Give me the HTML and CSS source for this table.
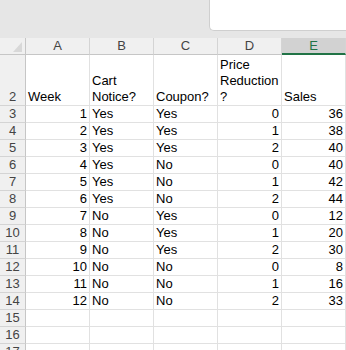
FILE: index.html
```html
<!DOCTYPE html>
<html lang="en">
<head>
    <meta charset="UTF-8">
    <title>Sheet</title>
    <link rel="stylesheet" href="styles.css">
</head>
<body>
    <div class="ribbon"><div class="namebox"></div></div>

<div class="sheet">
    <div class="corner"><span class="tri"></span></div>
    <div class="colhead">A</div>
    <div class="colhead">B</div>
    <div class="colhead">C</div>
    <div class="colhead">D</div>
    <div class="colhead sel">E</div>

    <div class="rowhead tall">2</div>
    <div class="cell tall">Week</div>
    <div class="cell tall">Cart<br>Notice?</div>
    <div class="cell tall">Coupon?</div>
    <div class="cell tall">Price<br>Reduction<br>?</div>
    <div class="cell tall">Sales</div>

    <div class="rowhead">3</div><div class="cell num">1</div><div class="cell">Yes</div><div class="cell">Yes</div><div class="cell num">0</div><div class="cell num">36</div>
    <div class="rowhead">4</div><div class="cell num">2</div><div class="cell">Yes</div><div class="cell">Yes</div><div class="cell num">1</div><div class="cell num">38</div>
    <div class="rowhead">5</div><div class="cell num">3</div><div class="cell">Yes</div><div class="cell">Yes</div><div class="cell num">2</div><div class="cell num">40</div>
    <div class="rowhead">6</div><div class="cell num">4</div><div class="cell">Yes</div><div class="cell">No</div><div class="cell num">0</div><div class="cell num">40</div>
    <div class="rowhead">7</div><div class="cell num">5</div><div class="cell">Yes</div><div class="cell">No</div><div class="cell num">1</div><div class="cell num">42</div>
    <div class="rowhead">8</div><div class="cell num">6</div><div class="cell">Yes</div><div class="cell">No</div><div class="cell num">2</div><div class="cell num">44</div>
    <div class="rowhead">9</div><div class="cell num">7</div><div class="cell">No</div><div class="cell">Yes</div><div class="cell num">0</div><div class="cell num">12</div>
    <div class="rowhead">10</div><div class="cell num">8</div><div class="cell">No</div><div class="cell">Yes</div><div class="cell num">1</div><div class="cell num">20</div>
    <div class="rowhead">11</div><div class="cell num">9</div><div class="cell">No</div><div class="cell">Yes</div><div class="cell num">2</div><div class="cell num">30</div>
    <div class="rowhead">12</div><div class="cell num">10</div><div class="cell">No</div><div class="cell">No</div><div class="cell num">0</div><div class="cell num">8</div>
    <div class="rowhead">13</div><div class="cell num">11</div><div class="cell">No</div><div class="cell">No</div><div class="cell num">1</div><div class="cell num">16</div>
    <div class="rowhead">14</div><div class="cell num">12</div><div class="cell">No</div><div class="cell">No</div><div class="cell num">2</div><div class="cell num">33</div>
    <div class="rowhead">15</div><div class="cell"></div><div class="cell"></div><div class="cell"></div><div class="cell"></div><div class="cell"></div>
    <div class="rowhead">16</div><div class="cell"></div><div class="cell"></div><div class="cell"></div><div class="cell"></div><div class="cell"></div>
    <div class="rowhead">17</div><div class="cell"></div><div class="cell"></div><div class="cell"></div><div class="cell"></div><div class="cell"></div>
</div>
</body>
</html>
```

FILE: styles.css
```css
body {
    margin: 0;
    background: #ffffff;
    font-family: 'Liberation Sans', Arial, sans-serif;
    overflow: hidden;
}
.ribbon {
    height: 38px;
    background-color: #e6e6e6;
    display: flex;
    justify-content: flex-end;
}
.namebox {
    width: 136px;
    height: 30px;
    background: #ffffff;
    border-left: 1px solid #cfcfcf;
    border-bottom: 1px solid #cfcfcf;
    border-bottom-left-radius: 5px;
}
.sheet {
    display: grid;
    grid-template-columns: 26px repeat(5, 64px);
    grid-auto-rows: 17px;
}
.sheet > div {
    box-sizing: border-box;
    border-right: 1px solid #e1e1e1;
    border-bottom: 1px solid #e1e1e1;
}
.corner {
    background: #f0f0f0;
    display: flex;
    justify-content: flex-end;
    align-items: flex-end;
    padding: 0 3px 2px 0;
    border-bottom-color: #c6c6c6 !important;
    border-right-color: #c6c6c6 !important;
}
.tri {
    width: 0;
    height: 0;
    border-left: 9px solid transparent;
    border-bottom: 10px solid #d8d8d8;
}
.colhead {
    background: #f0f0f0;
    color: #444444;
    font-size: 13px;
    line-height: 16px;
    text-align: center;
    border-right-color: #d4d4d4 !important;
    border-bottom-color: #c6c6c6 !important;
}
.colhead.sel {
    background: #d2d2d2;
    color: #217346;
    border-bottom: 2px solid #217346 !important;
}
.rowhead {
    background: #f0f0f0;
    color: #444444;
    font-size: 13px;
    line-height: 16px;
    border-right-color: #c6c6c6 !important;
    border-bottom-color: #d4d4d4 !important;
    display: flex;
    align-items: flex-end;
    justify-content: center;
}
.cell {
    font-size: 13px;
    line-height: 16px;
    color: #000000;
    padding: 0 2px;
    white-space: nowrap;
    overflow: hidden;
    display: flex;
    align-items: flex-end;
}
.cell.num {
    justify-content: flex-end;
}
.sheet > .tall {
    grid-row: span 3;
}
.cell.tall {
    padding-top: 2px;
    flex-direction: column;
    justify-content: flex-end;
    align-items: flex-start;
}
```
